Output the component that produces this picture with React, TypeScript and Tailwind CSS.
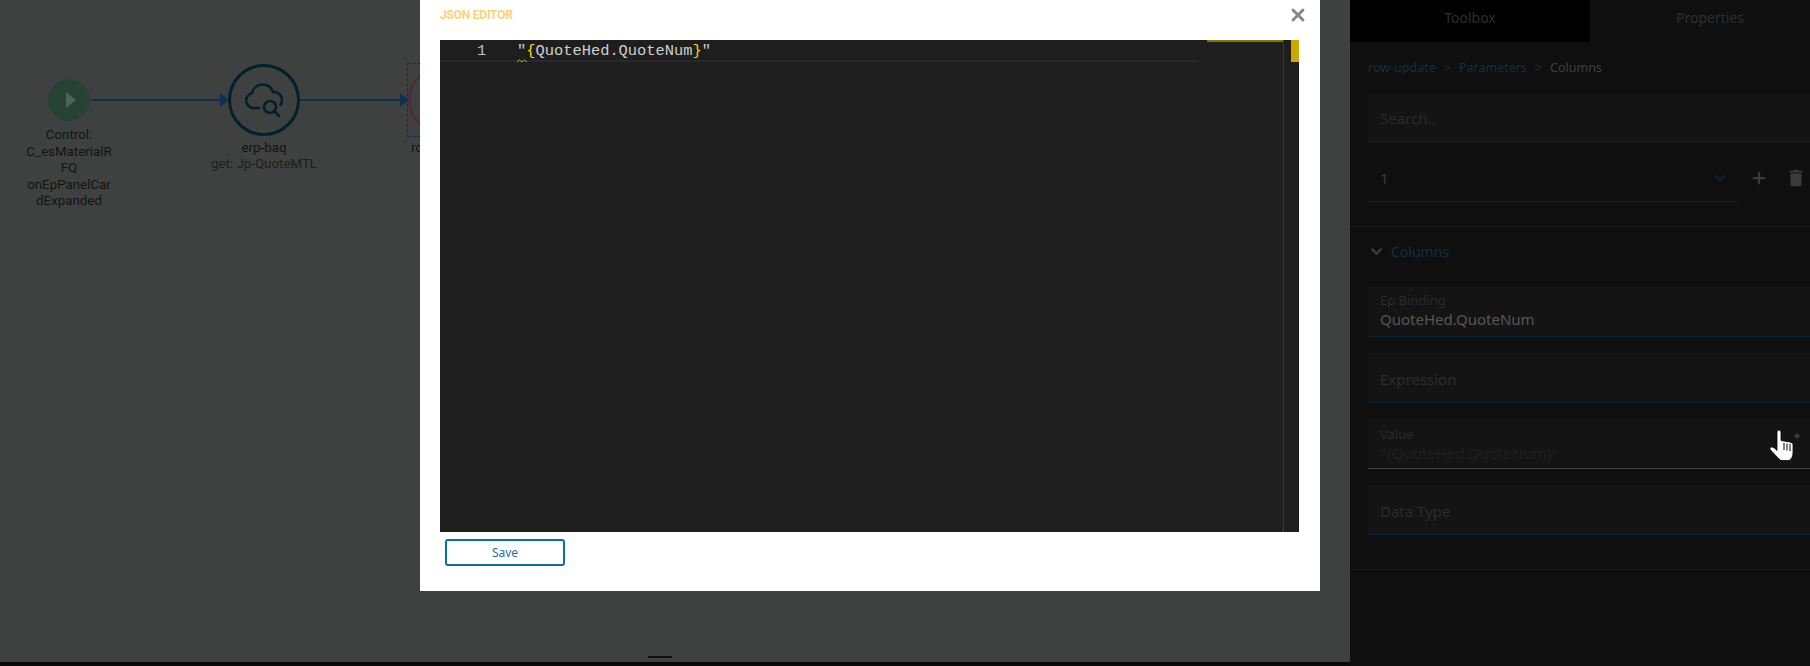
import React from 'react';
import { ChevronDown, Plus, X } from 'lucide-react';

const panelFont = "font-['Noto_Sans','Open_Sans',sans-serif]";

const controlLines = ['Control:', 'C_esMaterialR', 'FQ', 'onEpPanelCar', 'dExpanded'];

interface FieldProps {
  label: string;
  value?: string;
  dim?: boolean;
  active?: boolean;
}

const Field: React.FC<FieldProps> = ({ label, value, dim, active }) => (
  <div className={`relative h-[50px] mb-[16px] bg-[#141414] pl-3 border-b ${active ? 'border-[#454545]' : 'border-[#0b2333]'}`}>
    {value ? (
      <>
        <div className={`${active ? 'pt-[6px]' : 'pt-[4px]'} text-[13px] leading-[18px] text-[#2a2a2a]`}>{label}</div>
        <div className={`text-[15px] leading-[20px] ${dim ? 'text-[#1f1f1f]' : 'text-[#575757]'}`}>{value}</div>
      </>
    ) : (
      <div className="pt-[14px] text-[15px] leading-[24px] text-[#2c2c2c]">{label}</div>
    )}
  </div>
);

const FlowCanvas: React.FC = () => (
  <div className="relative flex-1 bg-[#3f4140] font-['Roboto',sans-serif]">
    {/* control node */}
    <div className="absolute left-[48px] top-[79px] w-[42px] h-[42px] rounded-full bg-[#264235] flex items-center justify-center">
      <div className="ml-[3px] w-0 h-0 border-y-[8px] border-y-transparent border-l-[10px] border-l-[#4f6359]" />
    </div>
    <div className="absolute left-[91px] top-[99px] w-[130px] h-[2px] bg-[#10304f]" />
    <div className="absolute left-[220px] top-[93px] w-0 h-0 border-y-[7px] border-y-transparent border-l-[9px] border-l-[#10304f]" />
    <div className="absolute left-[9px] top-[127px] w-[120px] text-center text-[13.33px] leading-[16.5px] text-[#141414]">
      {controlLines.map((line) => (
        <div key={line}>{line}</div>
      ))}
    </div>

    {/* baq node */}
    <div className="absolute left-[228px] top-[64px] w-[72px] h-[72px] rounded-full border-[3px] border-[#02202c] flex items-center justify-center">
      <svg width="38" height="38" viewBox="0 0 38 38" fill="none" stroke="#02202c" strokeWidth="2.6" strokeLinecap="round">
        <path d="M14 27H8.500a7.500 7.500 0 0 1-1.500-14.800C8.500 6.500 13 3.500 17.500 3.500c5 0 9 3 10.500 7.500 5-.5 9 3 9 8 0 2-.5 3.500-1.500 5" />
        <circle cx="25" cy="26" r="6" />
        <path d="M29.500 30.500L34 35" />
      </svg>
    </div>
    <div className="absolute left-[300px] top-[99px] w-[101px] h-[2px] bg-[#10304f]" />
    <div className="absolute left-[400px] top-[93px] w-0 h-0 border-y-[7px] border-y-transparent border-l-[9px] border-l-[#10304f]" />
    <div className="absolute left-[194px] top-[140px] w-[140px] text-center text-[13.33px] leading-[16px] text-[#1e1e1e]">
      <div className="text-[#141414]">erp-baq</div>
      <div>get: Jp-QuoteMTL</div>
    </div>

    {/* update node, mostly behind the dialog */}
    <div className="absolute left-[407px] top-[63px] w-[80px] h-[74px] border border-dashed border-[#10304f]" />
    <div className="absolute left-[408px] top-[65px] w-[70px] h-[70px] rounded-full border-[3px] border-[#4b2d3e]" />
    <div className="absolute left-[411px] top-[140px] text-[13.33px] leading-[16px] text-[#141414]">row</div>

    <div className="absolute left-[648px] bottom-[8px] w-[24px] h-[2px] bg-[#111]" />
    <div className="absolute left-0 right-0 bottom-0 h-[4px] bg-[#0a0a0a]" />
  </div>
);

const JsonDialog: React.FC = () => (
  <div className="absolute left-[420px] top-0 w-[900px] h-[591px] bg-white px-[20px] font-['Roboto',sans-serif]">
    <div className="flex items-center justify-between h-[40px] pb-[10px]">
      <span className="text-[12px] font-bold tracking-[-0.2px] text-[#fbd07f]">JSON EDITOR</span>
      <X size={20} strokeWidth={3.5} className="text-[#888] mr-[-8px]" />
    </div>
    <div className="relative w-[859px] h-[492px] bg-[#1e1e1e] overflow-hidden font-['Liberation_Mono',monospace]">
      <div className="flex h-[22px] w-[759px] border-b-2 border-[#282828] text-[15.4px] leading-[20px]">
        <span className="w-[77px] pl-[37px] pt-[1px] text-[#c0c0c0]">1</span>
        <span className="pt-[1px] text-[#cfcfcf]">
          "<span className="text-[#ffd700]">{'{'}</span>
          <span>QuoteHed.QuoteNum</span>
          <span className="text-[#ffd700]">{'}'}</span>"
        </span>
      </div>
      <svg className="absolute left-[77px] top-[19px]" width="10" height="4" viewBox="0 0 10 4" fill="none" stroke="#c9a800">
        <path d="M0 3l2.500-2 2.500 2 2.500-2 2.500 2" />
      </svg>
      <div className="absolute left-[767px] top-0 w-[76px] h-[2px] bg-[#8a7300]" />
      <div className="absolute left-[843px] top-0 bottom-0 w-px bg-[#3a3a3a]" />
      <div className="absolute left-[851px] top-0 w-[8px] h-[22px] bg-[#c9a800]" />
    </div>
    <button className="block mt-[7px] ml-[5px] w-[120px] h-[27px] border-2 border-[#0e6ea8] rounded-[3px] bg-white text-[12px] text-[#2f6ea8] font-['Noto_Sans',sans-serif]">
      Save
    </button>
  </div>
);

const SidePanel: React.FC = () => (
  <div className={`w-[460px] shrink-0 bg-[#0f0f0f] overflow-hidden ${panelFont}`}>
    <div className="flex w-[480px] h-[42px] text-[14px] leading-[36px] text-center text-[#2e2e2e]">
      <div className="w-[240px] bg-black">Toolbox</div>
      <div className="w-[240px]">Properties</div>
    </div>
    <div className="w-[480px] pl-[18px] pr-[20px]">
      <div className="flex items-center gap-[8px] h-[52px] pt-[1px] text-[12.5px] text-[#0f3140]">
        <span>row-update</span>
        <span className="text-[#2c2c2c]">&gt;</span>
        <span>Parameters</span>
        <span className="text-[#2c2c2c]">&gt;</span>
        <span className="text-[#3f3f3f]">Columns</span>
      </div>
      <div className="h-[48px] bg-[#141414] pl-3 border-b border-[#0b2333] text-[15px] leading-[48px] text-[#2a2a2a]">
        Search..
      </div>
      <div className="flex items-center h-[60px]">
        <div className="flex items-center justify-between w-[370px] h-[60px] pt-[13px] pl-3 pr-[10px] border-b border-[#0b2333] text-[15px] text-[#3a3a3a]">
          <span>1</span>
          <ChevronDown size={16} strokeWidth={2.5} className="text-[#0b2a38]" />
        </div>
        <Plus size={18} strokeWidth={3} className="ml-[12px] mt-[12px] text-[#3a3a3a]" />
        <svg className="ml-[17px] mt-[12px]" width="22" height="22" viewBox="0 0 24 24" fill="#3a3a3a">
          <path d="M6 19c0 1.100.9 2 2 2h8c1.100 0 2-.9 2-2V7H6v12zM19 4h-3.500l-1-1h-5l-1 1H5v2h14V4z" />
        </svg>
      </div>
    </div>
    <div className="mt-[24px] border-t border-[#191919] pl-[18px] pr-[20px] w-[480px]">
      <div className="flex items-center gap-[6px] h-[48px] text-[14px] text-[#0f3140]">
        <ChevronDown size={17} strokeWidth={3.5} className="text-[#3a3a3a]" />
        <span>Columns</span>
      </div>
      <div className="mt-[12px]">
        <Field label="Ep Binding" value="QuoteHed.QuoteNum" />
        <Field label="Expression" />
        <Field label="Value" value={'"{QuoteHed.QuoteNum}"'} dim active />
        <Field label="Data Type" />
      </div>
    </div>
    <div className="mt-[34px] border-t border-[#191919]" />
  </div>
);

const HandCursor: React.FC = () => (
  <svg className="absolute left-[1768px] top-[428px]" width="36" height="36" viewBox="0 0 36 36">
    <path d="M26 8l3-3 3 3-3 3z" fill="#3a3a3a" />
    <path
      d="M9 4a2 2 0 0 1 4 0v8.500l3 .5 3 .5 3 .5 3 1.500V25c0 3.500-1.500 6-4 7.500h-8c-3-2-7-7-10.500-10.500-1.200-1.300-.5-3 1-3 2 0 3.500 1.500 5.500 3.500z"
      fill="#fff"
      stroke="#000"
      strokeWidth="0.8"
    />
    <path d="M16 15v7M19 15.500v7M22 16v7" stroke="#000" strokeWidth="1" fill="none" />
  </svg>
);

export default function App() {
  return (
    <div className="relative flex w-[1810px] h-[666px] overflow-hidden">
      <FlowCanvas />
      <SidePanel />
      <JsonDialog />
      <HandCursor />
    </div>
  );
}
